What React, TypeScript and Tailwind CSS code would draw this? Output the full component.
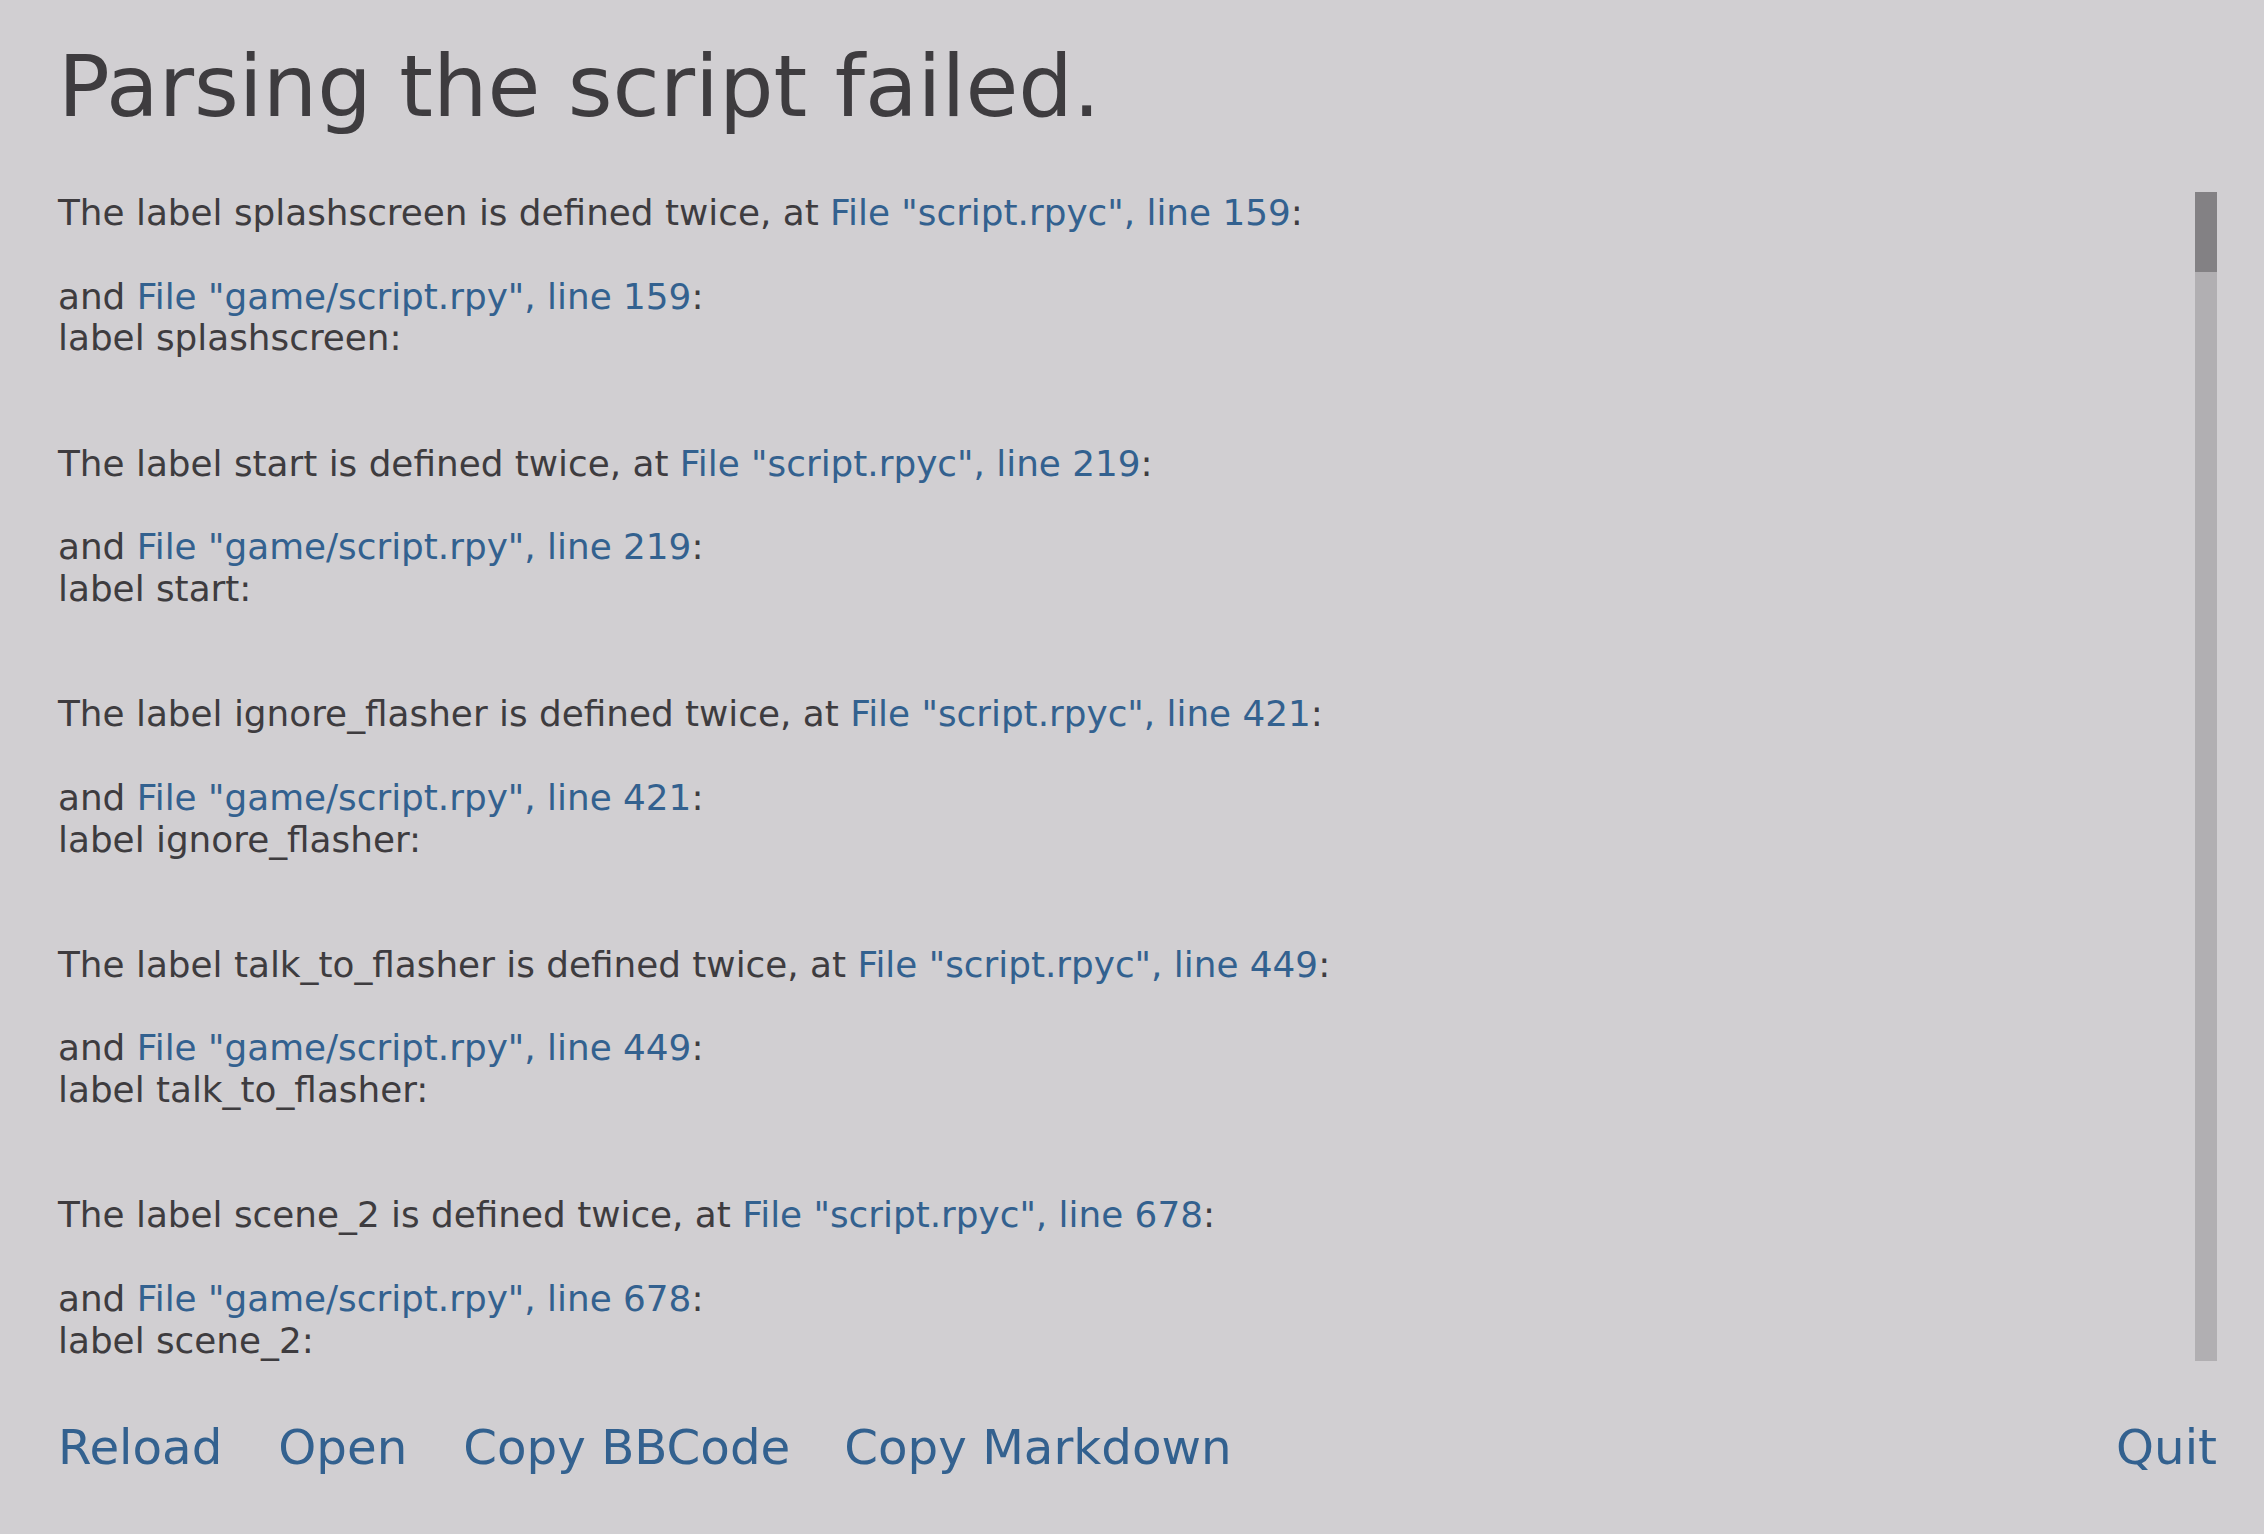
import React from "react";

const blocks = [
  { label: "splashscreen", line: "159" },
  { label: "start", line: "219" },
  { label: "ignore_flasher", line: "421" },
  { label: "talk_to_flasher", line: "449" },
  { label: "scene_2", line: "678" },
];

function Link({ children }: { children: React.ReactNode }) {
  return <span className="text-[#33618f]">{children}</span>;
}

export default function App() {
  return (
    <div
      className="w-[2264px] h-[1534px] bg-[#d1cfd2] text-[#3e3c3f] flex flex-col pl-[58px] pr-[47px] pt-[35px] overflow-hidden"
      style={{ fontFamily: '"DejaVu Sans", sans-serif' }}
    >
      <h1 className="text-[86px] leading-[1.2] h-[103px] font-normal whitespace-nowrap">
        Parsing the script failed.
      </h1>
      <div className="mt-[54px] h-[1169px] flex flex-row">
        <div className="flex-1 flex flex-col gap-[83.3px] text-[35.8px] leading-[41.83px] whitespace-pre">
          {blocks.map((b) => (
            <div key={b.label}>
              <div>
                The label {b.label} is defined twice, at{" "}
                <Link>File "script.rpyc", line {b.line}</Link>:
              </div>
              <div>&nbsp;</div>
              <div>
                and <Link>File "game/script.rpy", line {b.line}</Link>:
              </div>
              <div>label {b.label}:</div>
            </div>
          ))}
        </div>
        <div className="w-[22px] h-full bg-[#b1afb2] flex flex-col">
          <div className="h-[80px] bg-[#838184]" />
        </div>
      </div>
      <div className="mt-[56px] flex flex-row items-start text-[48.3px] leading-[1.25] text-[#33618f] whitespace-nowrap">
        <span>Reload</span>
        <span className="ml-[56px]">Open</span>
        <span className="ml-[56px]">Copy BBCode</span>
        <span className="ml-[54px]">Copy Markdown</span>
        <span className="ml-auto">Quit</span>
      </div>
    </div>
  );
}
